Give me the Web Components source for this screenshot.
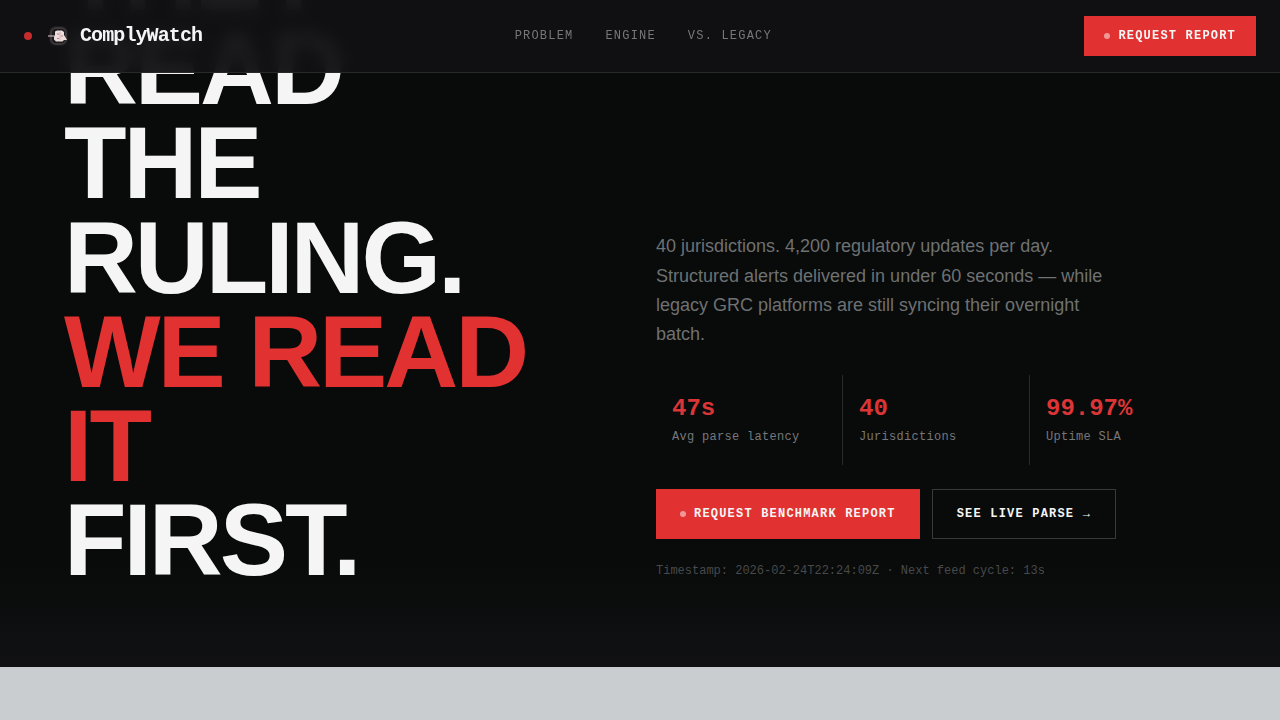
<!DOCTYPE html>
<html lang="en">
<head>
<meta charset="utf-8">
<title>ComplyWatch</title>
<style>
  :root {
    --red: #e13131;
    --ink: #080b0a;
    --panel: #111113;
    --white: #f5f5f5;
    --line: #29292b;
    --mono: "Liberation Mono", "Courier New", monospace;
    --sans: "Liberation Sans", Arial, sans-serif;
  }
  body { margin: 0; background: #cacdd0; font-family: var(--sans); color: var(--white); }
</style>
</head>
<body>
<cw-header>
  <cw-nav-link slot="nav" href="#problem">PROBLEM</cw-nav-link>
  <cw-nav-link slot="nav" href="#engine">ENGINE</cw-nav-link>
  <cw-nav-link slot="nav" href="#legacy">VS. LEGACY</cw-nav-link>
  <cw-button slot="action" compact dot>REQUEST REPORT</cw-button>
</cw-header>
<cw-hero>
  <span slot="title">THEY<br>READ<br>THE<br>RULING.</span>
  <span slot="accent">WE READ<br>IT</span>
  <span slot="ending">FIRST.</span>
  <span slot="lead">40 jurisdictions. 4,200 regulatory updates per day. Structured alerts delivered in under 60 seconds — while legacy GRC platforms are still syncing their overnight batch.</span>
  <cw-stat slot="stats" label="Avg parse latency">47s</cw-stat>
  <cw-stat slot="stats" label="Jurisdictions">40</cw-stat>
  <cw-stat slot="stats" label="Uptime SLA">99.97%</cw-stat>
  <cw-button slot="actions" dot>REQUEST BENCHMARK REPORT</cw-button>
  <cw-button slot="actions" outline>SEE LIVE PARSE →</cw-button>
  <span slot="note">Timestamp: 2026-02-24T22:24:09Z · Next feed cycle: 13s</span>
</cw-hero>

<script>
const define = (name, html, setup) => {
  const template = document.createElement('template');
  template.innerHTML = html;
  customElements.define(name, class extends HTMLElement {
    constructor() {
      super();
      this.attachShadow({ mode: 'open' }).append(template.content.cloneNode(true));
      if (setup) setup(this, this.shadowRoot);
    }
  });
};

define('cw-nav-link', `
  <style>
    :host { display: block; }
    a { display: block; font: 12px/18px var(--mono); letter-spacing: 0.1em; color: #77777a; text-decoration: none; }
    a:hover { color: var(--white); }
  </style>
  <a><slot></slot></a>`,
  (host, root) => { root.querySelector('a').href = host.getAttribute('href'); });

define('cw-button', `
  <style>
    :host { display: block; }
    button {
      display: flex; align-items: center; gap: 8px; margin: 0; padding: 16px 24px;
      border: 0; border-radius: 0; background: var(--red); color: var(--white);
      font: bold 12px/18px var(--mono); letter-spacing: 0.1em; white-space: nowrap; cursor: pointer;
    }
    i { display: none; width: 6px; height: 6px; border-radius: 50%; background: #fff; opacity: .5; }
    :host([dot]) i { display: block; }
    :host([compact]) button { padding: 11px 20px; }
    :host([outline]) button { padding: 15px 24px; border: 1px solid #39393b; background: transparent; }
  </style>
  <button type="button"><i></i><slot></slot></button>`);

define('cw-logo', `
  <style>
    :host { display: block; }
    svg { display: block; width: 20px; height: 20px; }
  </style>
  <svg viewBox="0 0 20 20" aria-hidden="true">
    <rect x="1" y="0" width="19" height="20" rx="6" fill="#1c1a1d"/>
    <rect x="3" y="2" width="15" height="16" rx="5" fill="none" stroke="#3b3639" stroke-width="2"/>
    <path d="M0 10H7" stroke="#c9b4b5" stroke-width="1.200"/>
    <path d="M7 5.500L9 4.500H14L16 6V9L17 10.500L19 14H16L14.500 15.500H8L6 13.500V11L7 9.500Z" fill="#ecdcdc"/>
    <path d="M9 8H11.500M13 10H15M9 12.500H11" stroke="#b98084" stroke-width="1"/>
    <path d="M12 6V14" stroke="#d3a9ab" stroke-width=".8"/>
  </svg>`);

define('cw-header', `
  <style>
    :host { display: block; position: sticky; top: 0; z-index: 10; }
    header {
      display: flex; align-items: center; justify-content: space-between; padding: 16px 24px;
      background: rgba(17, 17, 19, .95); backdrop-filter: blur(8px); border-bottom: 1px solid var(--line);
    }
    .brand { display: flex; align-items: center; gap: 12px; color: var(--white); text-decoration: none; }
    .live { width: 8px; height: 8px; margin-right: 4px; border-radius: 50%; background: #c52c2d; }
    .name { font: bold 20px/24px var(--mono); letter-spacing: -0.045em; }
    nav { display: flex; gap: 32px; }
  </style>
  <header>
    <a class="brand" href="#top"><span class="live"></span><cw-logo></cw-logo><span class="name">ComplyWatch</span></a>
    <nav><slot name="nav"></slot></nav>
    <slot name="action"></slot>
  </header>`);

define('cw-stat', `
  <style>
    :host { display: block; padding: 20px 16px 18px; background: var(--ink); }
    .value { font: bold 24px/28px var(--mono); color: #dc3537; }
    .label { margin-top: 4px; font: 12px/20px var(--mono); letter-spacing: 0.025em; color: #77777a; }
  </style>
  <div class="value"><slot></slot></div>
  <div class="label"></div>`,
  (host, root) => { root.querySelector('.label').textContent = host.getAttribute('label'); });

define('cw-hero', `
  <style>
    :host { display: block; margin-top: -145px; }
    section {
      display: grid; grid-template-columns: 1fr 1fr; gap: 32px; align-items: end; padding: 0 64px 80px;
      background: linear-gradient(to top, var(--panel), var(--ink) 104px);
    }
    h1 { margin: 0; font: bold 8vw/0.92 var(--sans); letter-spacing: -0.03em; }
    h1 span { display: block; }
    .accent { color: var(--red); }
    .lead { max-width: 460px; margin: 0 0 26px; font-size: 18px; line-height: 1.625; color: #6f7172; }
    .stats { display: grid; grid-template-columns: repeat(3, 1fr); gap: 1px; margin-bottom: 24px; background: var(--line); }
    .actions { display: flex; gap: 12px; margin-bottom: 24px; }
    .note { margin: 0; padding-bottom: 8px; font: 12px/16px var(--mono); color: #48494a; }
  </style>
  <section>
    <h1>
      <span><slot name="title"></slot></span>
      <span class="accent"><slot name="accent"></slot></span>
      <span><slot name="ending"></slot></span>
    </h1>
    <div>
      <p class="lead"><slot name="lead"></slot></p>
      <div class="stats"><slot name="stats"></slot></div>
      <div class="actions"><slot name="actions"></slot></div>
      <p class="note"><slot name="note"></slot></p>
    </div>
  </section>`);
</script>
</body>
</html>
